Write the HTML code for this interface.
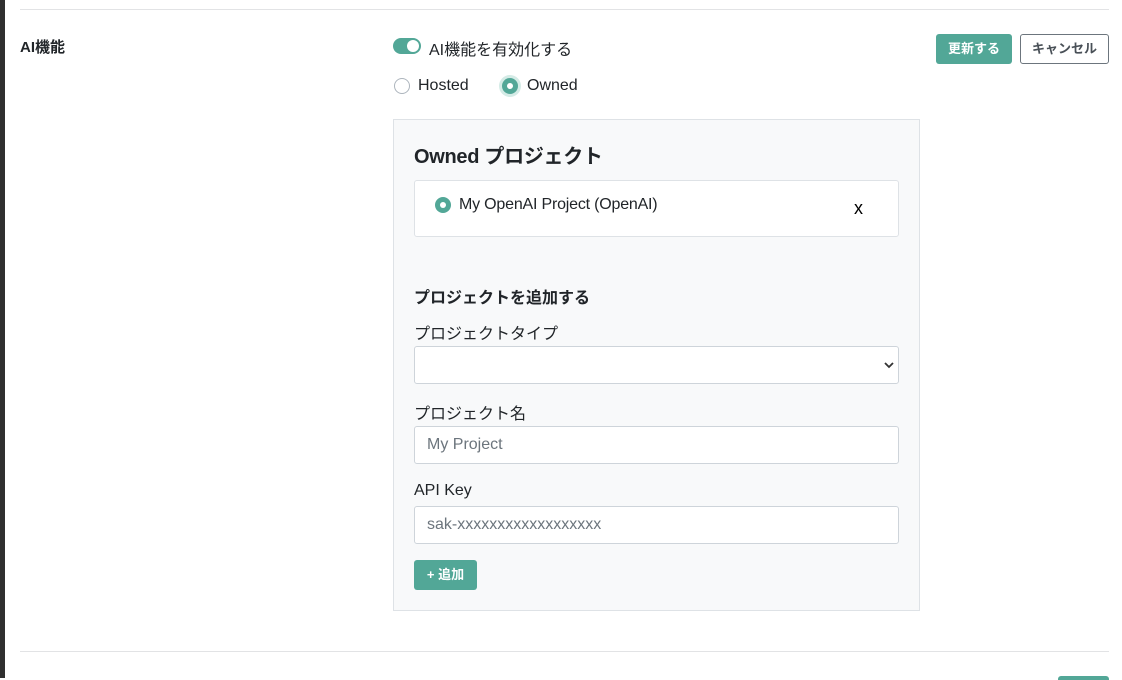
<!DOCTYPE html><html><head><meta charset="utf-8"><style>
*{box-sizing:border-box;margin:0;padding:0}
body{width:1122px;height:678px;overflow:hidden;background:#fff;position:relative;font-family:"Liberation Sans","Noto Sans CJK JP",sans-serif;color:#212529}
.a{position:absolute}
.hr{position:absolute;left:20px;width:1089px;height:1px;background:#e2e3e5}
.inp{position:absolute;left:414px;width:485px;height:38px;border:1px solid #ced4da;border-radius:3px;background:#fff;font-size:16px;color:#6c757d;padding:9px 12px}
.lbl{position:absolute;left:414px;font-size:16px;color:#212529}
</style></head><body>
<div class="a" style="left:0;top:0;width:5px;height:678px;background:#2f2f2f"></div>
<div class="hr" style="top:9px"></div>
<div class="a" style="left:20px;top:36px;font-size:15px;font-weight:bold">AI機能</div>
<div class="a" style="left:393px;top:38px;width:28px;height:16px;border-radius:8px;background:#52a797"></div>
<div class="a" style="left:407px;top:40px;width:12px;height:12px;border-radius:50%;background:#fff"></div>
<div class="a" style="left:429px;top:36px;font-size:16px">AI機能を有効化する</div>
<div class="a" style="left:394px;top:78px;width:16px;height:16px;border-radius:50%;border:1px solid #adb5bd;background:#fff"></div>
<div class="a" style="left:418px;top:77px;font-size:16px">Hosted</div>
<div class="a" style="left:499px;top:75px;width:22px;height:22px;border-radius:50%;background:#d4ebe6"></div>
<div class="a" style="left:502px;top:78px;width:16px;height:16px;border-radius:50%;background:#52a797"></div>
<div class="a" style="left:507px;top:83px;width:6px;height:6px;border-radius:50%;background:#fff"></div>
<div class="a" style="left:527px;top:77px;font-size:16px">Owned</div>
<div class="a" style="left:936px;top:34px;width:76px;height:30px;border-radius:3px;background:#52a797;color:#fff;font-size:13px;font-weight:bold;text-align:center;line-height:30px">更新する</div>
<div class="a" style="left:1020px;top:34px;width:89px;height:30px;border-radius:3px;border:1px solid #6c757d;color:#495057;font-size:13px;font-weight:bold;text-align:center;line-height:28px">キャンセル</div>
<div class="a" style="left:393px;top:119px;width:527px;height:492px;background:#f8f9fa;border:1px solid #dee2e6"></div>
<div class="a" style="left:414px;top:140px;font-size:20px;font-weight:bold;letter-spacing:-0.3px">Owned プロジェクト</div>
<div class="a" style="left:414px;top:180px;width:485px;height:57px;background:#fff;border:1px solid #dee2e6;border-radius:3px"></div>
<div class="a" style="left:435px;top:197px;width:16px;height:16px;border-radius:50%;background:#52a797"></div>
<div class="a" style="left:440px;top:202px;width:6px;height:6px;border-radius:50%;background:#fff"></div>
<div class="a" style="left:459px;top:196px;font-size:16px;letter-spacing:-0.2px">My OpenAI Project (OpenAI)</div>
<div class="a" style="left:854px;top:198px;font-size:18px;color:#000">x</div>
<div class="a" style="left:414px;top:284px;font-size:16px;font-weight:bold">プロジェクトを追加する</div>
<div class="lbl" style="top:320px">プロジェクトタイプ</div>
<div class="inp" style="top:346px"></div>
<svg class="a" style="left:884px;top:361px" width="10" height="8" viewBox="0 0 10 8"><path d="M1 2l4 4 4-4" fill="none" stroke="#333" stroke-width="1.8"/></svg>
<div class="lbl" style="top:400px">プロジェクト名</div>
<div class="inp" style="top:426px">My Project</div>
<div class="lbl" style="top:482px">API Key</div>
<div class="inp" style="top:506px">sak-xxxxxxxxxxxxxxxxxx</div>
<div class="a" style="left:414px;top:560px;width:63px;height:30px;border-radius:3px;background:#52a797;color:#fff;font-size:13px;font-weight:bold;text-align:center;line-height:30px">+ 追加</div>
<div class="hr" style="top:651px"></div>
<div class="a" style="left:1058px;top:676px;width:51px;height:4px;border-radius:3px 3px 0 0;background:#52a797"></div>
</body></html>
